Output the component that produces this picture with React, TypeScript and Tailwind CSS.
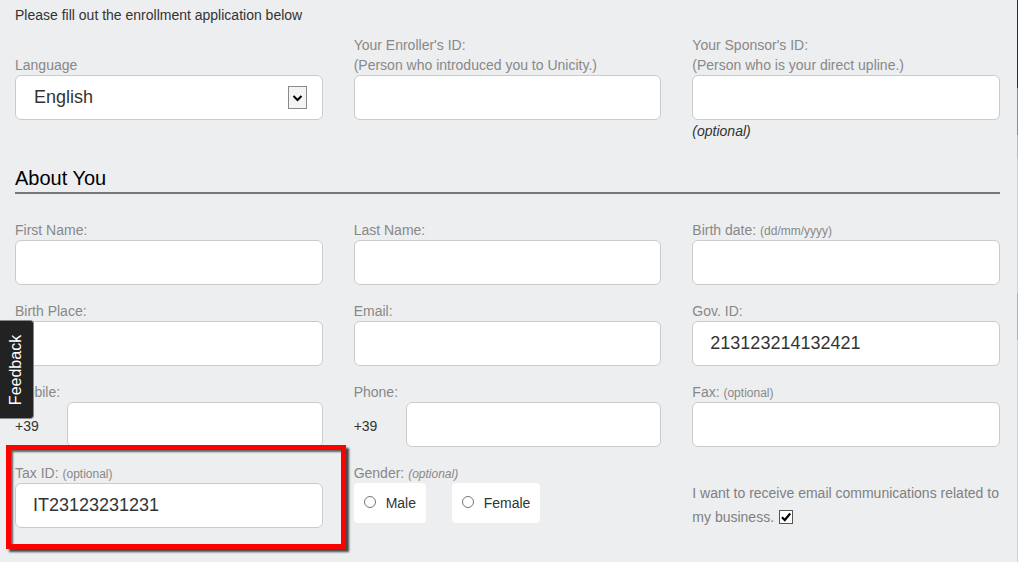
import React from "react";

const inputCls =
  "h-[45px] w-full rounded-[6px] border border-[#cbcbcb] bg-white flex items-center pl-[17px] text-[18px] text-[#333]";

function Label({ children }: { children: React.ReactNode }) {
  return <div className="h-[20px] leading-[20px] text-[14px] text-[#888] whitespace-nowrap">{children}</div>;
}

function Small({ children, italic }: { children: React.ReactNode; italic?: boolean }) {
  return <span className={"text-[12px] " + (italic ? "italic" : "")}>{children}</span>;
}

function Field({ label, value }: { label: React.ReactNode; value?: string }) {
  return (
    <div className="flex flex-col">
      <Label>{label}</Label>
      <div className={inputCls}>{value}</div>
    </div>
  );
}

function PhoneField({ label }: { label: string }) {
  return (
    <div className="flex flex-col">
      <Label>{label}</Label>
      <div className="flex items-center">
        <span className="w-[52px] shrink-0 text-[14px] text-[#333] pt-[4px]">+39</span>
        <div className={inputCls}></div>
      </div>
    </div>
  );
}

function Radio({ label, w }: { label: string; w: string }) {
  return (
    <div className={"h-[40px] rounded-[4px] bg-white flex items-center pl-[10px] " + w}>
      <span className="w-[12px] h-[12px] shrink-0 rounded-full border border-[#777] bg-white mb-[3px]" />
      <span className="ml-[10px] text-[14px] text-[#333]">{label}</span>
    </div>
  );
}

export default function App() {
  return (
    <div className="relative flex min-h-[562px] bg-[#edeef0] font-['Liberation_Sans',Arial,sans-serif] overflow-hidden">
      <div className="flex-1 pl-[15px] pr-[17px]">
        <p className="pt-[5px] text-[14px] leading-[20px] text-[#333]">
          Please fill out the enrollment application below
        </p>

        <div className="mt-[10px] grid grid-cols-3 gap-x-[31px]">
          <div className="flex flex-col pt-[20px]">
            <Label>Language</Label>
            <div className="h-[45px] w-full rounded-[6px] border border-[#cbcbcb] bg-white flex items-center pl-[18px] pr-[15px] text-[18px] text-[#333]">
              <span className="flex-1">English</span>
              <span className="w-[19px] h-[23px] shrink-0 border border-[#8a8a8a] bg-[#f4f4f4] flex items-center justify-center">
                <svg width="11" height="8" viewBox="0 0 11 8">
                  <path d="M1.5 2 L5.5 6 L9.5 2" fill="none" stroke="#000" strokeWidth="2" />
                </svg>
              </span>
            </div>
          </div>
          <div className="flex flex-col">
            <Label>Your Enroller's ID:</Label>
            <Label>(Person who introduced you to Unicity.)</Label>
            <div className={inputCls}></div>
          </div>
          <div className="flex flex-col">
            <Label>Your Sponsor's ID:</Label>
            <Label>(Person who is your direct upline.)</Label>
            <div className={inputCls}></div>
            <div className="mt-[1px] h-[20px] leading-[20px] text-[14px] italic text-[#333]">(optional)</div>
          </div>
        </div>

        <h2 className="mt-[25px] text-[20px] leading-[24px] text-black pb-[2px] border-b-2 border-[#777]">About You</h2>

        <div className="mt-[26px] grid grid-cols-3 gap-x-[31px] gap-y-[16px]">
          <Field label="First Name:" />
          <Field label="Last Name:" />
          <Field label={<>Birth date: <Small>(dd/mm/yyyy)</Small></>} />

          <Field label="Birth Place:" />
          <Field label="Email:" />
          <Field label="Gov. ID:" value="213123214132421" />

          <PhoneField label="Mobile:" />
          <PhoneField label="Phone:" />
          <Field label={<>Fax: <Small>(optional)</Small></>} />

          <Field label={<>Tax ID: <Small>(optional)</Small></>} value="IT23123231231" />
          <div className="flex flex-col">
            <Label>
              Gender: <Small italic>(optional)</Small>
            </Label>
            <div className="flex gap-[26px]">
              <Radio label="Male" w="w-[72px]" />
              <Radio label="Female" w="w-[88px]" />
            </div>
          </div>
          <div className="pt-[18px] text-[14px] leading-[24px] text-[#808080]">
            <div className="whitespace-nowrap">I want to receive email communications related to</div>
            <div className="flex items-center">
              <span>my business.</span>
              <span className="ml-[5px] w-[14px] h-[14px] shrink-0 border border-[#555] bg-white flex items-center justify-center">
                <svg width="12" height="12" viewBox="0 0 12 12">
                  <path d="M2 6.2 L4.8 9 L10.2 2.5" fill="none" stroke="#000" strokeWidth="2.2" />
                </svg>
              </span>
            </div>
          </div>
        </div>
      </div>

      <div className="w-[1px] flex flex-col">
        <div className="h-[88px] bg-[#2d2d2d]" />
        <div className="h-[47px] bg-[#3aa6dd]" />
        <div className="h-[24px] bg-[#8ec9ea]" />
        <div className="h-[134px] bg-[#d0d0d0]" />
        <div className="h-[47px] bg-[#a5c94b]" />
        <div className="h-[24px] bg-[#cfe1a0]" />
        <div className="flex-1 bg-[#d0d0d0]" />
      </div>

      <div className="absolute left-0 top-[320px] w-[34px] h-[99px] bg-[#222] border border-[#888] border-l-0 rounded-r-[4px] flex items-center justify-center">
        <span className="-rotate-90 whitespace-nowrap text-white text-[16px] leading-none">Feedback</span>
      </div>

      <div className="absolute left-[6px] top-[445px] w-[340px] h-[104px] border-[5px] border-[#ff0000] shadow-[3px_3px_2px_rgba(0,0,0,0.7),inset_2px_2px_2px_rgba(0,0,0,0.6)]" />
    </div>
  );
}
